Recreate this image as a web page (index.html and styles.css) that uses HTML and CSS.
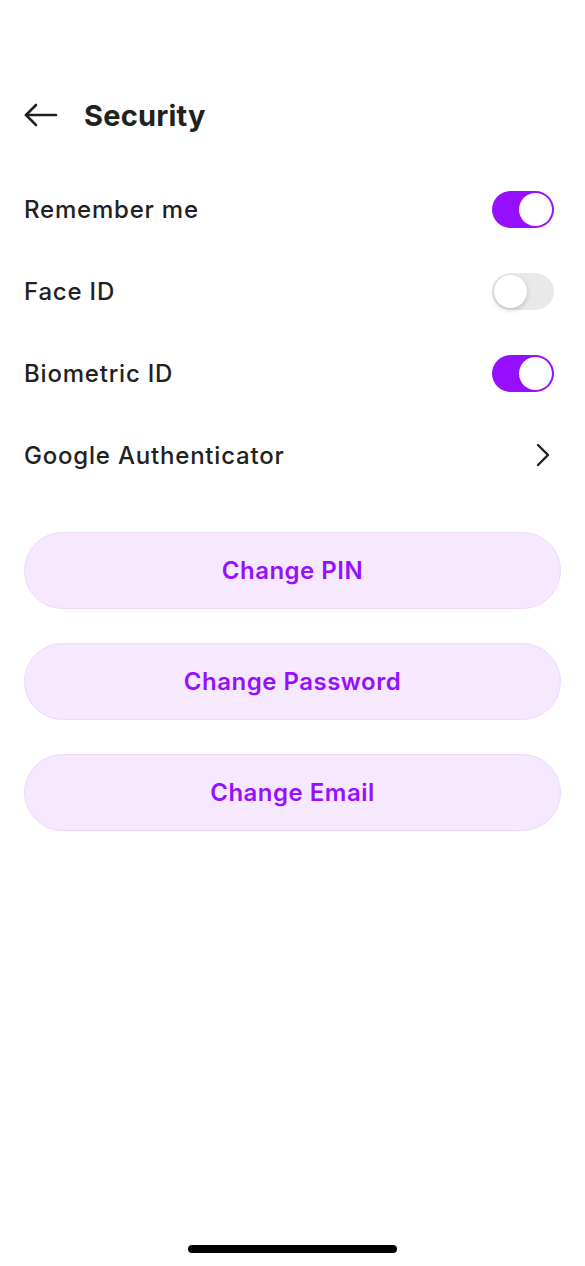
FILE: index.html
```html
<!DOCTYPE html>
<html lang="en">
<head>
  <meta charset="UTF-8">
  <meta name="viewport" content="width=device-width, initial-scale=1.0">
  <title>Security</title>
  <link rel="stylesheet" href="styles.css">
</head>

<body>
  <div class="screen">
    <header class="top-bar">
      <button class="back" aria-label="Back">
        <svg width="34" height="24" viewBox="0 0 34 24" fill="none" stroke="#212121" stroke-width="2.6" stroke-linecap="round" stroke-linejoin="round">
          <path d="M2 12 H32"/>
          <path d="M12 2 L2 12 L12 22"/>
        </svg>
      </button>
      <h1 class="title">Security</h1>
    </header>

    <ul class="settings">
      <li class="row">
        <span class="label">Remember me</span>
        <label class="switch">
          <input type="checkbox" checked>
          <span class="track"></span>
        </label>
      </li>
      <li class="row">
        <span class="label">Face ID</span>
        <label class="switch">
          <input type="checkbox">
          <span class="track"></span>
        </label>
      </li>
      <li class="row">
        <span class="label">Biometric ID</span>
        <label class="switch">
          <input type="checkbox" checked>
          <span class="track"></span>
        </label>
      </li>
      <li class="row">
        <span class="label">Google Authenticator</span>
        <svg class="chevron" width="16" height="24" viewBox="0 0 16 24" fill="none" stroke="#212121" stroke-width="2.4" stroke-linecap="round" stroke-linejoin="round">
          <path d="M3 2 L13 12 L3 22"/>
        </svg>
      </li>
    </ul>

    <div class="actions">
      <button class="pill">Change PIN</button>
      <button class="pill">Change Password</button>
      <button class="pill">Change Email</button>
    </div>

    <div class="home-bar"></div>
  </div>
</body>
</html>
```

FILE: styles.css
```css
body {
  margin: 0;
  background-color: #fff;
  font-family: Inter, "Noto Sans", sans-serif;
  color: #212121;
}

.screen {
  height: 1266px;
  box-sizing: border-box;
  padding: 90px 24px 0 24px;
  display: flex;
  flex-direction: column;
}

.top-bar {
  height: 50px;
  display: flex;
  align-items: center;
  gap: 26px;
}

.back {
  background: none;
  border: none;
  padding: 0;
  display: flex;
  cursor: pointer;
}

.title {
  margin: 0;
  font-size: 29px;
  font-weight: 700;
  letter-spacing: 0.2px;
}

.settings {
  list-style: none;
  margin: 28px 0 0 0;
  padding: 0;
}

.row {
  height: 82px;
  display: flex;
  align-items: center;
  justify-content: space-between;
}

.label {
  font-size: 24px;
  font-weight: 500;
  letter-spacing: 0.8px;
}

.chevron {
  margin-right: 10px;
}

/* toggle */
.switch {
  position: relative;
  width: 62px;
  height: 37px;
  margin-right: 7px;
}

.switch input {
  appearance: none;
  margin: 0;
  position: absolute;
  inset: 0;
  z-index: 1;
  cursor: pointer;
}

.track {
  position: absolute;
  inset: 0;
  border-radius: 20px;
  background-color: #e9e9ea;
}

.track::after {
  content: '';
  position: absolute;
  top: 2px;
  left: 2px;
  width: 33px;
  height: 33px;
  border-radius: 50%;
  background-color: #fff;
  box-shadow: 0 2px 5px rgba(0, 0, 0, .2);
}

.switch input:checked + .track {
  background-color: #9610ff;
}

.switch input:checked + .track::after {
  left: auto;
  right: 2px;
  box-shadow: none;
}

/* buttons */
.actions {
  margin-top: 36px;
  display: flex;
  flex-direction: column;
  gap: 34px;
}

.pill {
  height: 77px;
  border-radius: 40px;
  border: 1.5px solid #eed8fe;
  background-color: #f5e8ff;
  color: #9610ff;
  font-family: Inter, "Noto Sans", sans-serif;
  font-size: 24px;
  font-weight: 600;
  letter-spacing: 0.5px;
  cursor: pointer;
}

.home-bar {
  margin: auto auto 13px auto;
  width: 209px;
  height: 8px;
  border-radius: 4px;
  background-color: #000;
}
```
